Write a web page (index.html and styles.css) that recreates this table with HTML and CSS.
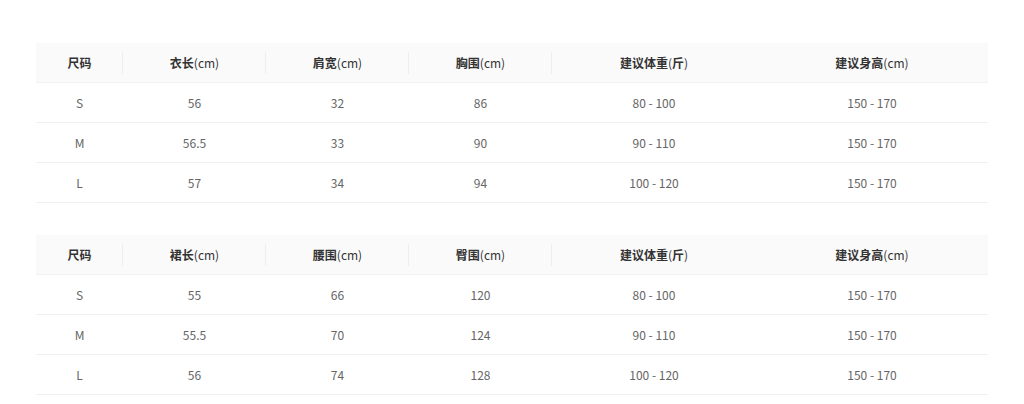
FILE: index.html
```html
<!DOCTYPE html>
<html lang="zh-CN">
<head>
<meta charset="utf-8">
<title>尺码表</title>
<link rel="stylesheet" href="styles.css">
</head>
<body>
<div class="page">
  <table class="size-table">
    <colgroup>
      <col class="c1"><col class="c2"><col class="c3"><col class="c4"><col class="c5"><col class="c6">
    </colgroup>
    <thead>
      <tr><th class="sep">尺码</th><th class="sep">衣长<span class="unit">(cm)</span></th><th class="sep">肩宽<span class="unit">(cm)</span></th><th class="sep">胸围<span class="unit">(cm)</span></th><th>建议体重<span class="unit">(</span>斤<span class="unit">)</span></th><th>建议身高<span class="unit">(cm)</span></th></tr>
    </thead>
    <tbody>
      <tr><td>S</td><td>56</td><td>32</td><td>86</td><td>80 - 100</td><td>150 - 170</td></tr>
      <tr><td>M</td><td>56.5</td><td>33</td><td>90</td><td>90 - 110</td><td>150 - 170</td></tr>
      <tr><td>L</td><td>57</td><td>34</td><td>94</td><td>100 - 120</td><td>150 - 170</td></tr>
    </tbody>
  </table>
  <table class="size-table">
    <colgroup>
      <col class="c1"><col class="c2"><col class="c3"><col class="c4"><col class="c5"><col class="c6">
    </colgroup>
    <thead>
      <tr><th class="sep">尺码</th><th class="sep">裙长<span class="unit">(cm)</span></th><th class="sep">腰围<span class="unit">(cm)</span></th><th class="sep">臀围<span class="unit">(cm)</span></th><th>建议体重<span class="unit">(</span>斤<span class="unit">)</span></th><th>建议身高<span class="unit">(cm)</span></th></tr>
    </thead>
    <tbody>
      <tr><td>S</td><td>55</td><td>66</td><td>120</td><td>80 - 100</td><td>150 - 170</td></tr>
      <tr><td>M</td><td>55.5</td><td>70</td><td>124</td><td>90 - 110</td><td>150 - 170</td></tr>
      <tr><td>L</td><td>56</td><td>74</td><td>128</td><td>100 - 120</td><td>150 - 170</td></tr>
    </tbody>
  </table>
</div>
</body>
</html>
```

FILE: styles.css
```css
html, body {
  margin: 0;
  padding: 0;
  background: #ffffff;
}

.page {
  padding: 43px 36px 0 36px;
  display: flex;
  flex-direction: column;
  gap: 32px;
  width: 952px;
}

.size-table {
  width: 952px;
  border-collapse: collapse;
  table-layout: fixed;
  font-family: "Noto Sans CJK SC", "Noto Sans", sans-serif;
  font-size: 12px;
}

.c1 { width: 87px; }
.c2 { width: 143px; }
.c3 { width: 143px; }
.c4 { width: 143px; }
.c5 { width: 204px; }
.c6 { width: 232px; }

.size-table th,
.size-table td {
  height: 39px;
  padding: 0 8px;
  text-align: center;
  vertical-align: middle;
  line-height: 16px;
}

.size-table th {
  background: #fafafa;
  color: #333333;
  font-weight: 700;
  position: relative;
  border-bottom: 1px solid #f2f2f2;
}

.size-table th .unit {
  font-weight: 400;
}

.size-table th.sep::after {
  content: "";
  position: absolute;
  right: 0;
  top: 50%;
  width: 1px;
  height: 22px;
  transform: translateY(-50%);
  background: #ededed;
}

.size-table td {
  color: #666666;
  border-bottom: 1px solid #f0f0f0;
}
```
